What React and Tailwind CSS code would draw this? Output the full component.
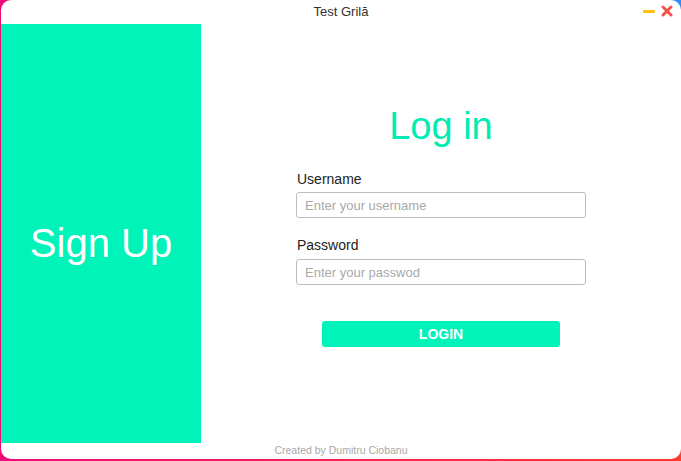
export default function App() {
    return (
        <div
            className="w-[681px] h-[461px] pl-px pb-[2px] bg-[radial-gradient(circle_at_100%_0%,#2a8cff_0,#2a8cff_8px,transparent_22px),linear-gradient(to_right,#ee0a78,#ff3a2e)]"
            style={{ fontFamily: '"Liberation Sans", Arial, sans-serif' }}
        >
            <div className="h-full bg-white rounded-[10px] overflow-hidden flex flex-col">
                {/* Title bar */}
                <div className="h-6 relative flex items-center justify-center">
                    <span className="text-[13px] text-[#333]">Test Grilă</span>
                    <div className="absolute right-[8px] top-[5px] flex items-center gap-[6px]">
                        <div className="w-[12px] h-[3px] bg-[#ffc00e] rounded-[1px]" />
                        <svg width="12" height="12" viewBox="0 0 12 12">
                            <path d="M2 2 L10 10 M10 2 L2 10" stroke="#f6524a" strokeWidth="3" strokeLinecap="round" />
                        </svg>
                    </div>
                </div>

                {/* Body */}
                <div className="flex h-[419px]">
                    <div className="w-[200px] bg-[#00f4b9] flex items-center justify-center pt-[18px]">
                        <span className="text-[40px] text-white">Sign Up</span>
                    </div>
                    <div className="flex-1 flex flex-col items-center pt-[79px]">
                        <h1 className="text-[38px] text-[#00ecb4] leading-[46px]">Log in</h1>
                        <div className="w-[290px] mt-[21px]">
                            <label className="block text-[14px] text-[#222] pl-px leading-[18px]">Username</label>
                            <input
                                className="mt-[4px] w-full h-[26px] border border-[#bdbdbd] rounded-[3px] px-[8px] text-[13px] outline-none placeholder:text-[#a9a9a9]"
                                placeholder="Enter your username"
                            />
                            <label className="block text-[14px] text-[#222] pl-px leading-[18px] mt-[18px]">Password</label>
                            <input
                                type="password"
                                className="mt-[5px] w-full h-[26px] border border-[#bdbdbd] rounded-[3px] px-[8px] text-[13px] outline-none placeholder:text-[#a9a9a9]"
                                placeholder="Enter your passwod"
                            />
                        </div>
                        <button className="mt-[36px] w-[238px] h-[26px] bg-[#00f4b9] rounded-[3px] text-white font-bold text-[14px]">
                            LOGIN
                        </button>
                    </div>
                </div>

                {/* Footer */}
                <div className="flex-1 flex items-center justify-center">
                    <span className="text-[10.5px] text-[#a8a8a8]">Created by Dumitru Ciobanu</span>
                </div>
            </div>
        </div>
    );
}
